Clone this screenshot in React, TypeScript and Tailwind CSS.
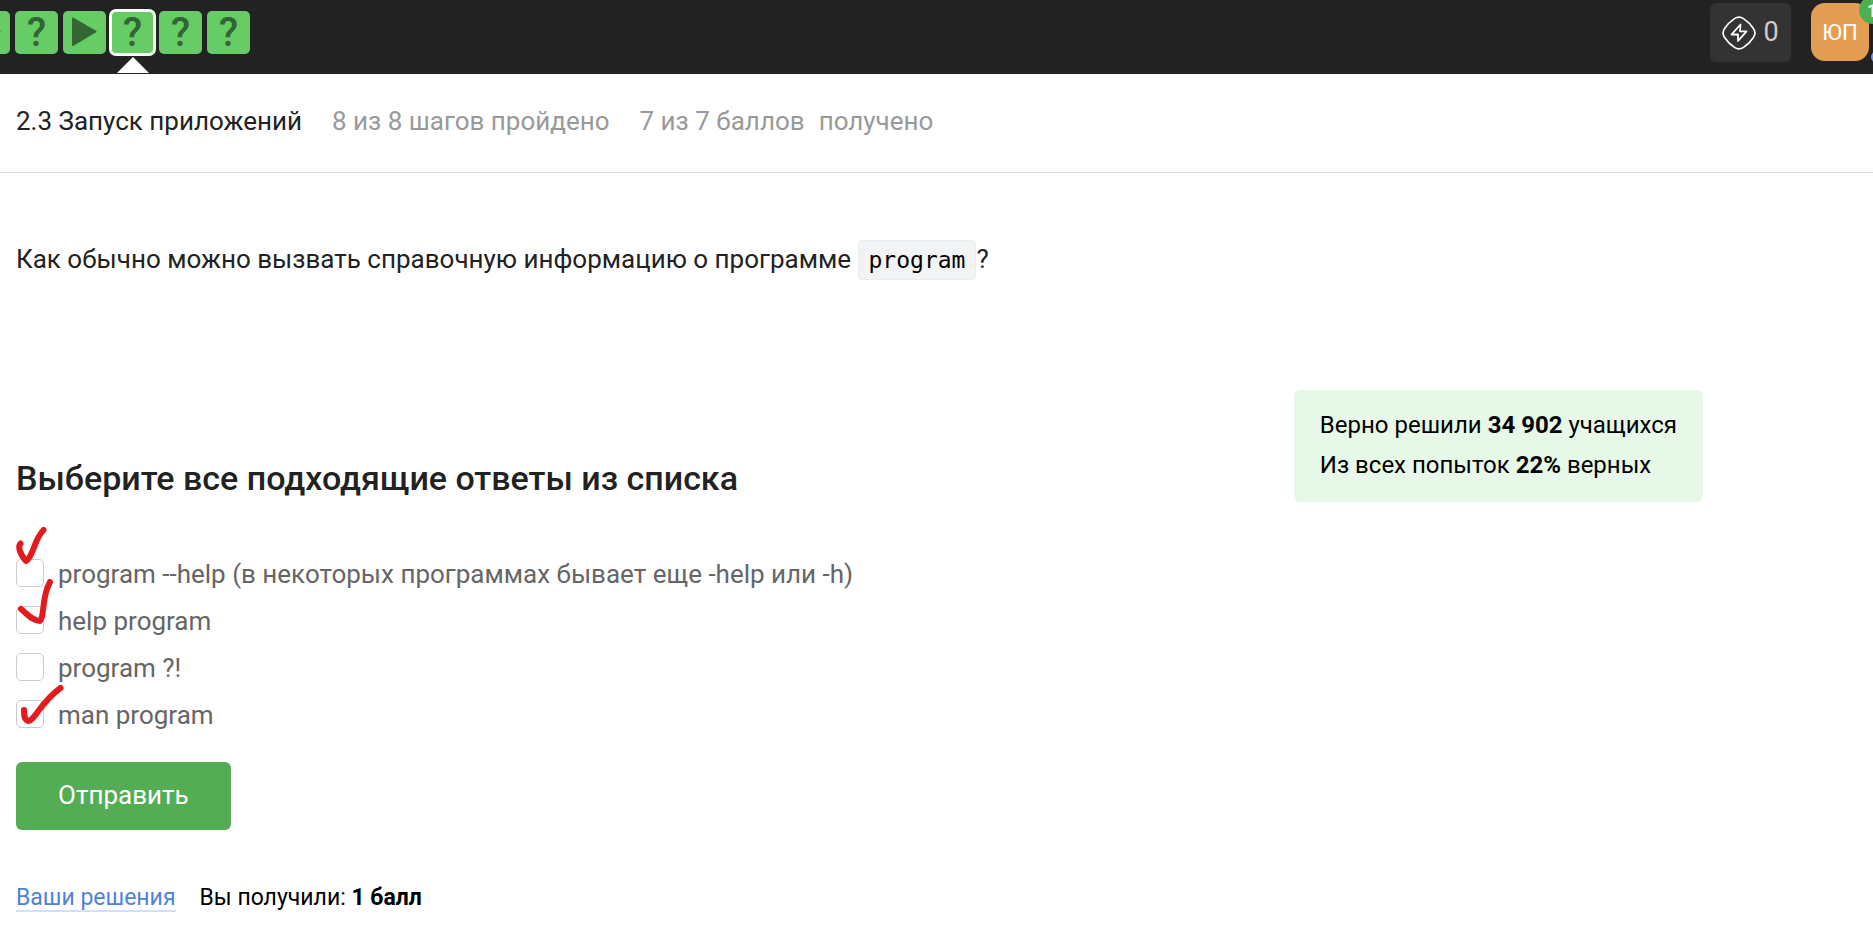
import React from "react";

type Step = { kind: "play" | "quiz"; active?: boolean };

const steps: Step[] = [
  { kind: "play" },
  { kind: "quiz" },
  { kind: "play" },
  { kind: "quiz", active: true },
  { kind: "quiz" },
  { kind: "quiz" },
];

const answers: string[] = [
  "program --help (в некоторых программах бывает еще -help или -h)",
  "help program",
  "program ?!",
  "man program",
];

function StepLink({ step }: { step: Step }) {
  return (
    <a
      href="#step"
      aria-label={step.kind === "play" ? "Видео" : "Задача"}
      aria-current={step.active ? "step" : undefined}
      className={
        "relative flex size-[43px] shrink-0 items-start justify-center rounded-[5px] bg-[#66cc66] text-[#336633]" +
        (step.active ? " shadow-[0_0_0_2px_#ffffff,inset_0_0_0_1px_#ffffff]" : "")
      }
    >
      {step.kind === "play" ? (
        <svg viewBox="0 0 43 43" className="size-[43px]" aria-hidden="true">
          <path
            d="M10 7.500 L32.500 20.500 L10 34 Z"
            fill="currentColor"
            stroke="currentColor"
            strokeWidth="2"
            strokeLinejoin="round"
          />
        </svg>
      ) : (
        <span className="text-[40px] leading-[43px] font-medium">?</span>
      )}
      {step.active && (
        <svg
          viewBox="0 0 32 16"
          className="absolute top-[46px] left-1/2 h-4 w-8 -translate-x-1/2"
          aria-hidden="true"
        >
          <path d="M16 0 L32 16 H0 Z" fill="#ffffff" />
        </svg>
      )}
    </a>
  );
}

function Header() {
  return (
    <header className="flex h-[74px] items-start justify-between overflow-hidden bg-[#222222]">
      <nav aria-label="Шаги урока" className="-ml-[33px] flex gap-[5px] pt-[11px]">
        {steps.map((step, i) => (
          <StepLink key={i} step={step} />
        ))}
      </nav>
      <div className="flex gap-5 pt-[3px] pr-1">
        <button
          type="button"
          className="flex h-[59px] w-[81px] items-center justify-center gap-[7px] rounded-md bg-[#333333] text-[27px] text-[#cccccc]"
        >
          <svg viewBox="0 0 34 34" className="size-[34px]" fill="none" stroke="#ffffff" strokeLinejoin="round" aria-hidden="true">
            <path
              d="M12.500 2.600 Q17 -0.500 21.500 2.600 Q27.500 6.500 31.400 12.500 Q34.500 17 31.400 21.500 Q27.500 27.500 21.500 31.400 Q17 34.500 12.500 31.400 Q6.500 27.500 2.600 21.500 Q-0.500 17 2.600 12.500 Q6.500 6.500 12.500 2.600 Z"
              strokeWidth="1.700"
            />
            <path d="M18.500 8.500 L9.500 18.500 H16 V25 L24.500 15.300 H18 Z" strokeWidth="1.800" />
          </svg>
          <span>0</span>
        </button>
        <button
          type="button"
          className="relative size-[58px] rounded-[14px] bg-[#e39e54] text-[22px] text-white"
        >
          ЮП
          <span className="absolute -top-[7px] left-12 flex h-7 w-8 items-center rounded-full bg-[#4caf50] pl-2 text-[18px] font-bold">
            1
          </span>
          <span className="absolute top-12 left-[60px] size-3 rounded-full bg-[#7b8fe8]" />
        </button>
      </div>
    </header>
  );
}

function PenMarks() {
  return (
    <svg
      viewBox="0 0 60 210"
      className="pointer-events-none absolute -top-[29px] -left-1 h-[210px] w-[60px]"
      fill="none"
      stroke="#e31b1f"
      strokeWidth="6"
      strokeLinecap="round"
      strokeLinejoin="round"
      aria-hidden="true"
    >
      <path d="M8.500 21.500 C6 24 7 31 14 39 C22 34 21 19 31.500 8" />
      <path d="M9 87 C15 92 21 99 28 99 C33 94 29 76 38 60" />
      <path d="M12 188 C12 193 12 198 16.500 199 C23 198 28 181 48.500 166" />
    </svg>
  );
}

export default function App() {
  return (
    <div className="min-h-screen bg-white font-['Roboto','Noto_Sans',sans-serif] text-[#222222]">
      <Header />
      <div className="flex h-[99px] items-start gap-[30px] border-b border-[#dddddd] px-4 pt-[31px] text-[26px] leading-8">
        <h1>2.3 Запуск приложений</h1>
        <p className="text-[#999999]">8 из 8 шагов пройдено</p>
        <p className="flex gap-[14px] text-[#999999]">
          <span>7 из 7 баллов</span>
          <span>получено</span>
        </p>
      </div>
      <main className="px-4 pt-[66px]">
        <p className="text-[26px] leading-10">
          Как обычно можно вызвать справочную информацию о программе{" "}
          <code className="inline-block h-10 rounded border border-[#eaecee] bg-[#f2f3f5] px-[10px] font-['DejaVu_Sans_Mono',monospace] text-[23px] leading-[38px] text-black">
            program
          </code>
          ?
        </p>

        <div className="mt-[110px] flex items-start justify-between">
          <form className="pt-[68px]" onSubmit={(e) => e.preventDefault()}>
            <fieldset>
              <legend className="text-[34px] leading-10 font-medium">
                Выберите все подходящие ответы из списка
              </legend>
              <div className="relative mt-[53px]">
                {answers.map((answer, i) => (
                  <div key={i} className="flex h-[47px] items-start gap-[14px]">
                    <input
                      id={`answer-${i}`}
                      type="checkbox"
                      className="mt-2 size-7 shrink-0 appearance-none rounded-[5px] border border-[#cccccc] bg-white"
                    />
                    <label htmlFor={`answer-${i}`} className="pt-[7px] text-[26px] leading-8 text-[#666666]">
                      {answer}
                    </label>
                  </div>
                ))}
                <PenMarks />
              </div>
            </fieldset>
            <button
              type="submit"
              className="mt-[23px] h-[68px] rounded-md bg-[#54ad54] px-[42px] pb-[2px] text-[26px] text-white"
            >
              Отправить
            </button>
          </form>
          <aside className="mr-[154px] rounded-md bg-[#e7f8e8] px-[26px] pt-[15px] pb-[17px] text-[24px] leading-10 text-black">
            <p>
              Верно решили <b>34 902</b> учащихся
            </p>
            <p>
              Из всех попыток <b>22%</b> верных
            </p>
          </aside>
        </div>

        <div className="mt-[55px] flex items-start gap-6 text-[23px] leading-[25px] text-black">
          <a href="#solutions" className="border-b-2 border-[#cfe0fc] text-[#4f81dd]">
            Ваши решения
          </a>
          <p>
            Вы получили: <b>1 балл</b>
          </p>
        </div>
      </main>
    </div>
  );
}
